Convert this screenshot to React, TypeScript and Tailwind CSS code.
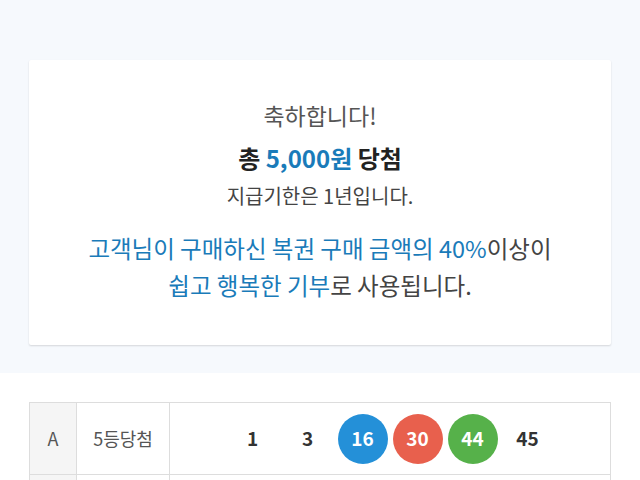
import React from "react";

const font = { fontFamily: '"Noto Sans CJK KR", "Noto Sans", sans-serif' };

function Num({ n, color }: { n: string; color?: string }) {
  if (!color) {
    return (
      <div className="w-[50px] h-[50px] flex items-center justify-center text-[19px] font-bold text-[#333]">
        {n}
      </div>
    );
  }
  return (
    <div
      className={`w-[50px] h-[50px] rounded-full flex items-center justify-center text-[19px] font-bold text-white ${color}`}
    >
      {n}
    </div>
  );
}

export default function App() {
  return (
    <div className="w-[640px] h-[480px] overflow-hidden bg-white" style={font}>
      <div className="bg-[#f6f9fd] pt-[60px] pb-[28px] px-[29px]">
        <div className="bg-white rounded-[2px] shadow-[0_1px_2px_rgba(0,0,0,0.14)] h-[285px] flex flex-col items-center pt-[39px]">
          <div className="text-[23px] leading-[32px] text-[#555]">축하합니다!</div>
          <div className="text-[24px] leading-[32px] font-bold text-[#222] mt-[11px]">
            총 <span className="text-[#1a7bb9]">5,000원</span> 당첨
          </div>
          <div className="text-[20px] leading-[28px] text-[#444] mt-[8px]">지급기한은 1년입니다.</div>
          <div className="text-[23.5px] leading-[37px] text-[#444] mt-[20px] text-center">
            <div>
              <span className="text-[#1a7bb9]">고객님이 구매하신 복권 구매 금액의 40%</span>이상이
            </div>
            <div>
              <span className="text-[#1a7bb9]">쉽고 행복한 기부</span>로 사용됩니다.
            </div>
          </div>
        </div>
      </div>
      <div className="px-[29px] pt-[29px]">
        <div className="border-t border-l border-[#ddd]">
          <div className="flex h-[72px] border-b border-[#ddd]">
            <div className="w-[47px] bg-[#f5f5f5] border-r border-[#ddd] flex items-center justify-center text-[18px] text-[#555]">
              A
            </div>
            <div className="w-[93px] border-r border-[#ddd] flex items-center justify-center text-[18px] text-[#555]">
              5등당첨
            </div>
            <div className="flex-1 border-r border-[#ddd] flex items-center justify-center gap-[5px]">
              <Num n="1" />
              <Num n="3" />
              <Num n="16" color="bg-[#2490d8]" />
              <Num n="30" color="bg-[#e8604d]" />
              <Num n="44" color="bg-[#56b14a]" />
              <Num n="45" />
            </div>
          </div>
          <div className="flex h-[72px] border-b border-[#ddd]">
            <div className="w-[47px] bg-[#f5f5f5] border-r border-[#ddd]"></div>
            <div className="w-[93px] border-r border-[#ddd]"></div>
            <div className="flex-1 border-r border-[#ddd]"></div>
          </div>
        </div>
      </div>
    </div>
  );
}
